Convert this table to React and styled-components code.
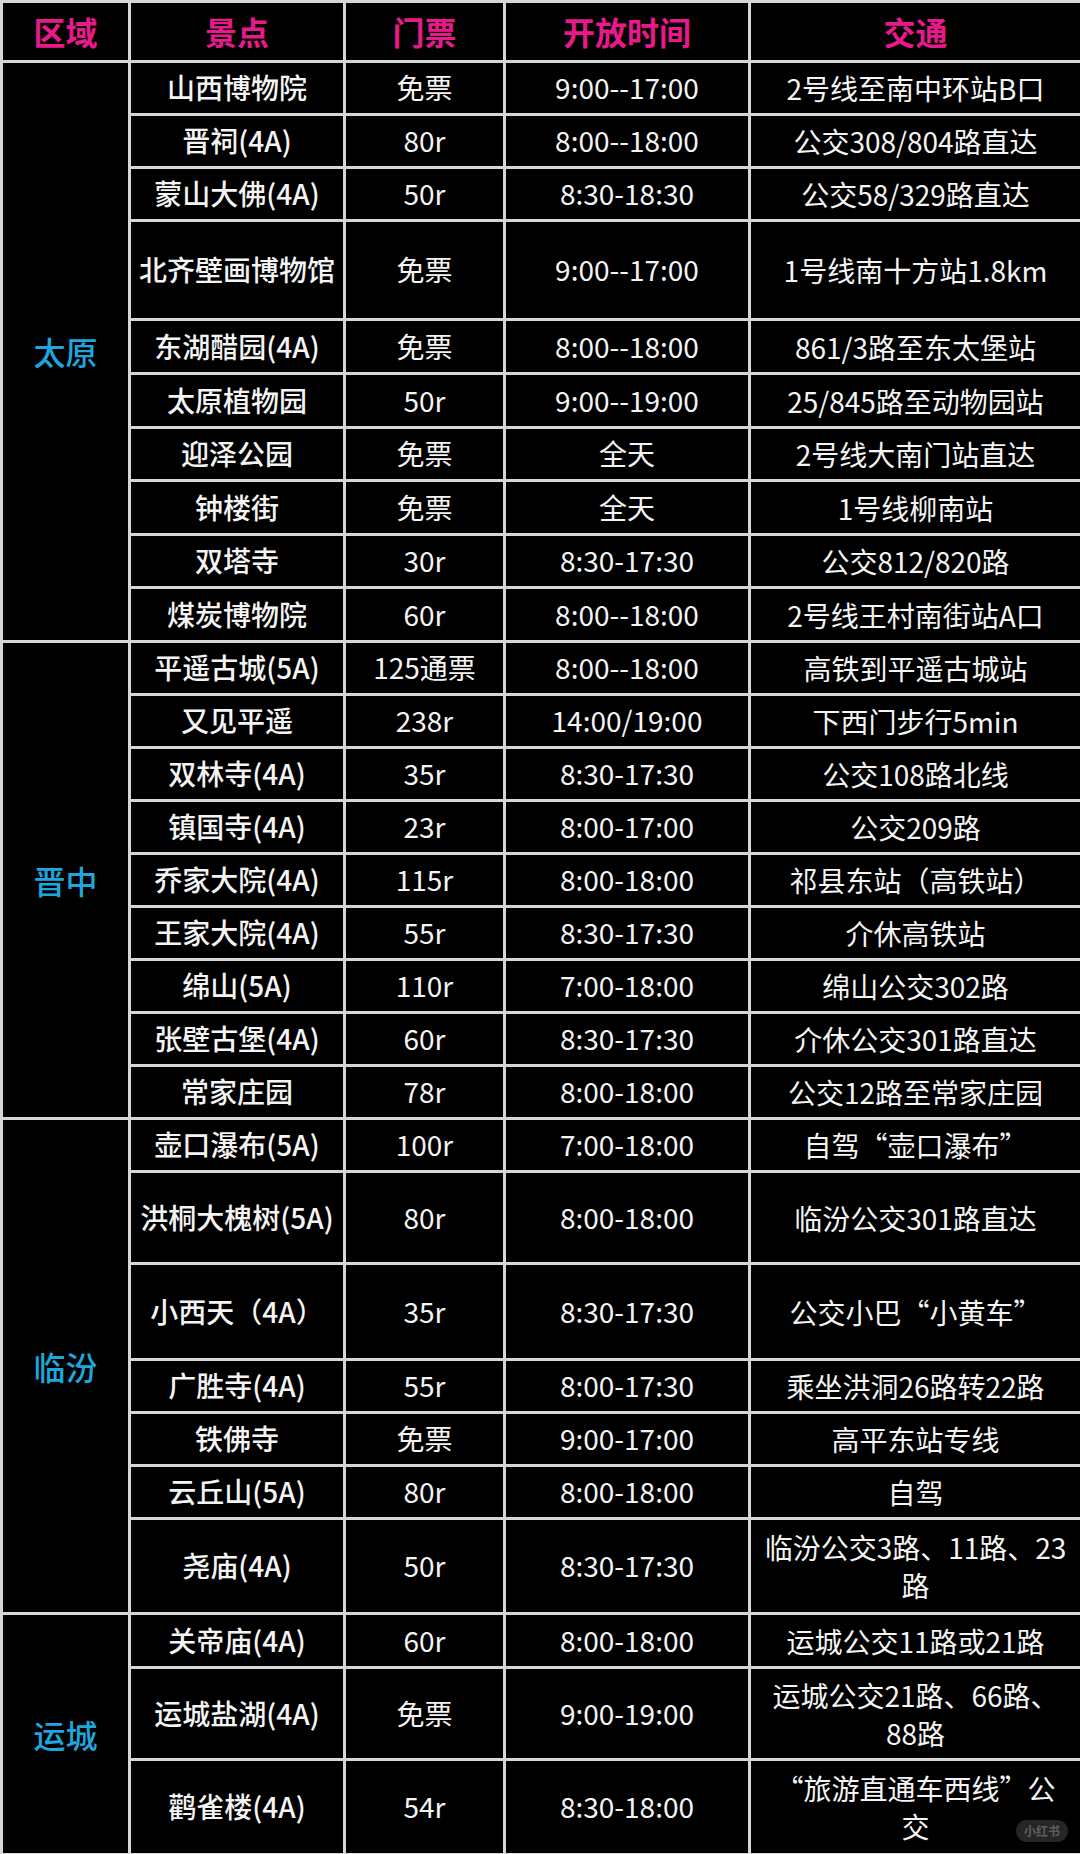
import React from "react";
import styled, { createGlobalStyle } from "styled-components";

const GlobalStyle = createGlobalStyle`
  html, body {
    margin: 0;
    padding: 0;
    background: #000;
  }
  body {
    font-family: "Noto Sans CJK SC", "Noto Sans", sans-serif;
  }
`;

// rows: [spot, ticket, hours, transit lines, optional row height]
const regions = [
  {
    name: "太原",
    rows: [
      ["山西博物院", "免票", "9:00--17:00", ["2号线至南中环站B口"]],
      ["晋祠(4A)", "80r", "8:00--18:00", ["公交308/804路直达"]],
      ["蒙山大佛(4A)", "50r", "8:30-18:30", ["公交58/329路直达"]],
      ["北齐壁画博物馆", "免票", "9:00--17:00", ["1号线南十方站1.8km"], 99],
      ["东湖醋园(4A)", "免票", "8:00--18:00", ["861/3路至东太堡站"], 54],
      ["太原植物园", "50r", "9:00--19:00", ["25/845路至动物园站"], 54],
      ["迎泽公园", "免票", "全天", ["2号线大南门站直达"]],
      ["钟楼街", "免票", "全天", ["1号线柳南站"], 54],
      ["双塔寺", "30r", "8:30-17:30", ["公交812/820路"]],
      ["煤炭博物院", "60r", "8:00--18:00", ["2号线王村南街站A口"], 54],
    ],
  },
  {
    name: "晋中",
    rows: [
      ["平遥古城(5A)", "125通票", "8:00--18:00", ["高铁到平遥古城站"]],
      ["又见平遥", "238r", "14:00/19:00", ["下西门步行5min"]],
      ["双林寺(4A)", "35r", "8:30-17:30", ["公交108路北线"]],
      ["镇国寺(4A)", "23r", "8:00-17:00", ["公交209路"]],
      ["乔家大院(4A)", "115r", "8:00-18:00", ["祁县东站（高铁站）"]],
      ["王家大院(4A)", "55r", "8:30-17:30", ["介休高铁站"]],
      ["绵山(5A)", "110r", "7:00-18:00", ["绵山公交302路"]],
      ["张壁古堡(4A)", "60r", "8:30-17:30", ["介休公交301路直达"]],
      ["常家庄园", "78r", "8:00-18:00", ["公交12路至常家庄园"]],
    ],
  },
  {
    name: "临汾",
    rows: [
      ["壶口瀑布(5A)", "100r", "7:00-18:00", ["自驾“壶口瀑布”"]],
      ["洪桐大槐树(5A)", "80r", "8:00-18:00", ["临汾公交301路直达"], 92],
      ["小西天（4A）", "35r", "8:30-17:30", ["公交小巴“小黄车”"], 96],
      ["广胜寺(4A)", "55r", "8:00-17:30", ["乘坐洪洞26路转22路"]],
      ["铁佛寺", "免票", "9:00-17:00", ["高平东站专线"]],
      ["云丘山(5A)", "80r", "8:00-18:00", ["自驾"]],
      ["尧庙(4A)", "50r", "8:30-17:30", ["临汾公交3路、11路、23", "路"], 95],
    ],
  },
  {
    name: "运城",
    rows: [
      ["关帝庙(4A)", "60r", "8:00-18:00", ["运城公交11路或21路"], 54],
      ["运城盐湖(4A)", "免票", "9:00-19:00", ["运城公交21路、66路、", "88路"], 92],
      ["鹳雀楼(4A)", "54r", "8:30-18:00", ["“旅游直通车西线”公", "交"], 95],
    ],
  },
];

const widths = [128, 215, 160, 245, 332];
const headers = ["区域", "景点", "门票", "开放时间", "交通"];

const App = () => {
  return (
    <Page>
      <GlobalStyle />
      <Table>
        <colgroup>
          {widths.map((w, i) => (
            <col key={i} style={{ width: w }} />
          ))}
        </colgroup>
        <thead>
          <tr>
            {headers.map((h) => (
              <HeadCell key={h}>{h}</HeadCell>
            ))}
          </tr>
        </thead>
        <tbody>
          {regions.map((region) =>
            region.rows.map((row, i) => (
              <Row key={row[0]} $height={row[4] || 53}>
                {i === 0 && (
                  <RegionCell rowSpan={region.rows.length}>{region.name}</RegionCell>
                )}
                <SpotCell>{row[0]}</SpotCell>
                <Cell>{row[1]}</Cell>
                <Cell>{row[2]}</Cell>
                <TransitCell>
                  {row[3].map((line, j) => (
                    <Line key={j}>{line}</Line>
                  ))}
                </TransitCell>
              </Row>
            ))
          )}
        </tbody>
      </Table>
      <Watermark>小红书</Watermark>
    </Page>
  );
};

const Page = styled.div`
  position: relative;
  width: 1080px;
  height: 1854px;
  overflow: hidden;
  background: #000;
`;

const Table = styled.table`
  width: 1080px;
  table-layout: fixed;
  border-collapse: collapse;
  border: 3px solid #d6d6d6;
`;

const HeadCell = styled.th`
  height: 57px;
  padding: 0;
  border: 3px solid #d6d6d6;
  color: #e8198b;
  font: 700 32px/1.2 "Noto Sans CJK SC", sans-serif;
  text-align: center;
`;

const Row = styled.tr`
  height: ${(p) => p.$height}px;
`;

const Cell = styled.td`
  padding: 0 4px;
  border: 3px solid #d6d6d6;
  color: #f4f4f4;
  font: 400 28px/1.35 "Noto Sans CJK SC", sans-serif;
  text-align: center;
  vertical-align: middle;
  white-space: nowrap;
`;

const SpotCell = styled(Cell)`
  font-weight: 500;
  padding: 0;
`;

const TransitCell = styled(Cell)`
  padding: 0;
`;

const Line = styled.div`
  line-height: 38px;
`;

const RegionCell = styled(Cell)`
  color: #1ea6de;
  font: 500 32px/1.2 "Noto Sans CJK SC", sans-serif;
`;

const Watermark = styled.span`
  position: absolute;
  right: 12px;
  bottom: 12px;
  padding: 2px 8px;
  border-radius: 12px;
  background: #262626;
  color: #5e5e5e;
  font: 700 12px/18px "Noto Sans CJK SC", sans-serif;
`;

export default App;
